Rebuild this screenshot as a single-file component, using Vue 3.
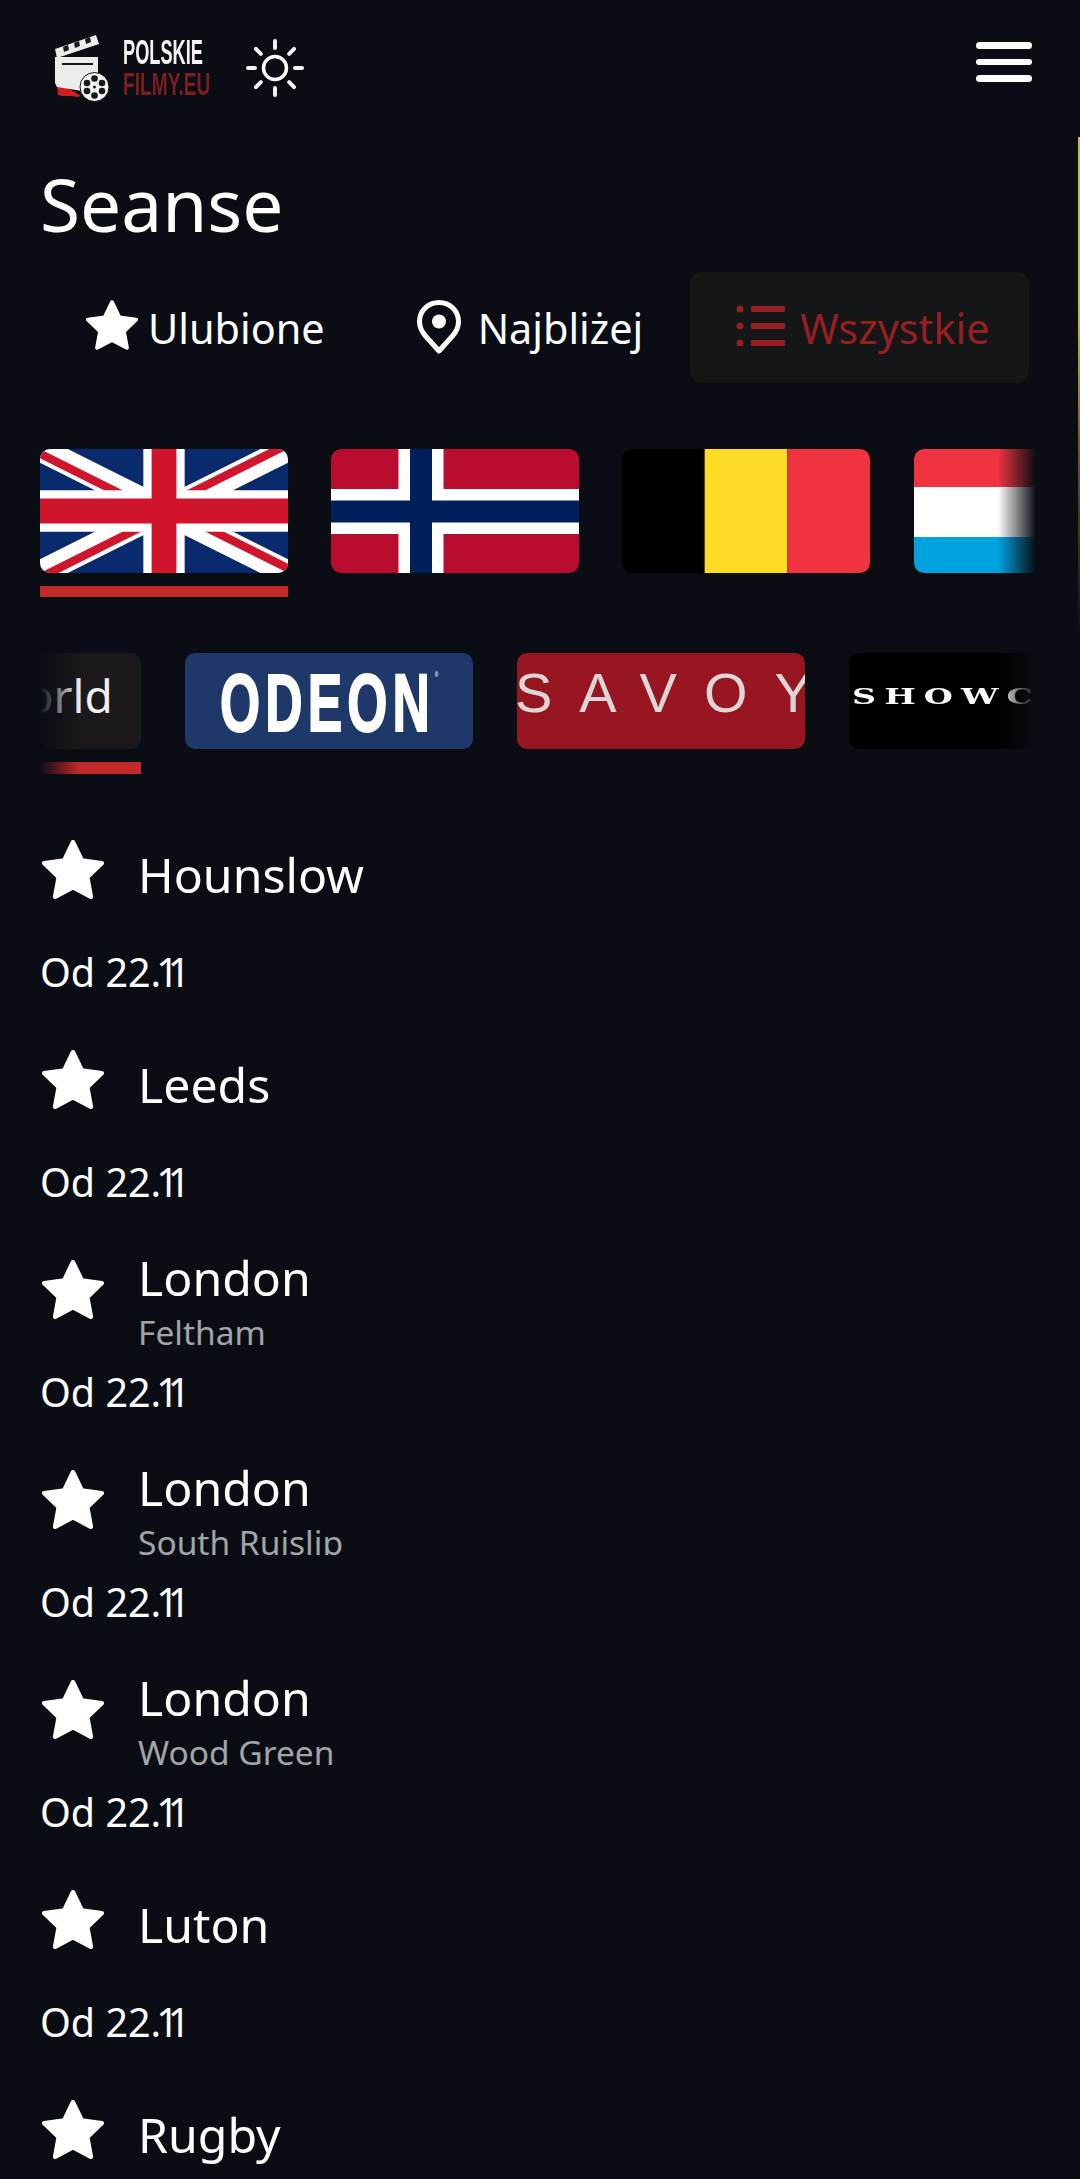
<script setup>
const starPath = 'M12 2.5l2.9 6 6.6.9-4.8 4.6 1.2 6.5-5.9-3.1-5.9 3.1 1.2-6.5-4.8-4.6 6.6-.9z'
const cities = [
  { name: 'Hounslow' },
  { name: 'Leeds' },
  { name: 'London', sub: 'Feltham' },
  { name: 'London', sub: 'South Ruislip' },
  { name: 'London', sub: 'Wood Green' },
  { name: 'Luton' },
  { name: 'Rugby' }
]
const rays = [0, 45, 90, 135, 180, 225, 270, 315]
</script>

<template>
  <div class="page">
    <i class="scrollbar"></i>

    <header class="header">
      <a class="logo">
        <svg class="logo-mark" viewBox="0 0 54 67" width="54" height="67">
          <path d="M2 51c8 1 14 3 24 10l-3 1C16 60 8 62 3 60z" fill="#d01f1f" />
          <path d="M0 22h43v34H27L2 52 0 48z" fill="#ececec" />
          <path d="M7 29h31" stroke="#15181c" stroke-width="2" />
          <path d="M0 14 41 0l3 9-42 14z" fill="#ececec" />
          <path d="M8 12l5-2 1 5-5 2zM19 8l5-2 1 5-5 2zM30 4l5-2 1 5-5 2z" fill="#15181c" />
          <circle cx="39.500" cy="52" r="14.500" fill="#f4f4f4" stroke="#0a0e14" stroke-width="1" />
          <g fill="#15181c">
            <circle cx="39.500" cy="43.500" r="3.300" />
            <circle cx="39.500" cy="60.500" r="3.300" />
            <circle cx="32" cy="48" r="3.300" />
            <circle cx="47" cy="48" r="3.300" />
            <circle cx="32" cy="56" r="3.300" />
            <circle cx="47" cy="56" r="3.300" />
            <circle cx="39.500" cy="52" r="1.500" />
          </g>
        </svg>
        <span class="logo-text">
          <span class="logo-top">POLSKIE</span>
          <span class="logo-bottom">FILMY.EU</span>
        </span>
      </a>
      <svg class="sun" viewBox="0 0 60 60" width="60" height="60">
        <circle cx="30" cy="30" r="11.500" fill="none" stroke="#fff" stroke-width="3.500" />
        <path
          v-for="r in rays"
          :key="r"
          d="M30 3v7"
          stroke="#f2f2f2"
          stroke-width="4"
          stroke-linecap="round"
          :transform="`rotate(${r} 30 30)`"
        />
      </svg>
      <div class="burger"><i></i><i></i><i></i></div>
    </header>

    <h1 class="title">Seanse</h1>

    <nav class="tabs">
      <div class="tab">
        <svg class="tab-star" viewBox="1.750 1.750 20.500 19.500"><path :d="starPath" /></svg>
        <span>Ulubione</span>
      </div>
      <div class="tab tab-near">
        <svg class="tab-pin" viewBox="0 0 44 54">
          <path d="M22 2.500C11 2.500 2.500 11 2.500 21.500c0 6 2.500 10.500 6 14.500L22 51l13.500-15c3.500-4 6-8.500 6-14.500C41.500 11 33 2.500 22 2.500z" fill="none" stroke="#fff" stroke-width="5" stroke-linejoin="round" />
          <circle cx="22" cy="21.500" r="7" fill="#fff" />
        </svg>
        <span>Najbliżej</span>
      </div>
      <div class="tab tab-active">
        <svg class="tab-list" viewBox="0 0 49 41">
          <circle cx="4" cy="4" r="3.500" />
          <circle cx="4" cy="21" r="3.500" />
          <circle cx="4" cy="38" r="3.500" />
          <rect x="15" y="1" width="34" height="6" rx="1" />
          <rect x="15" y="18" width="34" height="6" rx="1" />
          <rect x="15" y="35" width="34" height="6" rx="1" />
        </svg>
        <span>Wszystkie</span>
      </div>
    </nav>

    <section class="strip strip-flags">
      <div class="strip-item">
        <svg class="flag" viewBox="0 0 60 30" preserveAspectRatio="none">
          <clipPath id="uk-diagonals"><path d="M30 15h30v15zv15H0zH0V0zV0h30z" /></clipPath>
          <rect width="60" height="30" fill="#0a2a6e" />
          <path d="M0 0l60 30M60 0 0 30" stroke="#fff" stroke-width="6" />
          <path d="M0 0l60 30M60 0 0 30" clip-path="url(#uk-diagonals)" stroke="#cf142b" stroke-width="4" />
          <path d="M30 0v30M0 15h60" stroke="#fff" stroke-width="10" />
          <path d="M30 0v30M0 15h60" stroke="#cf142b" stroke-width="6" />
        </svg>
        <i class="marker"></i>
      </div>
      <div class="strip-item">
        <svg class="flag" viewBox="0 0 248 124" preserveAspectRatio="none">
          <rect width="248" height="124" fill="#ba0c2f" />
          <path d="M90 0v124M0 62.500h248" stroke="#fff" stroke-width="45" />
          <path d="M90 0v124M0 62.500h248" stroke="#00205b" stroke-width="22" />
        </svg>
      </div>
      <div class="strip-item">
        <svg class="flag" viewBox="0 0 3 1" preserveAspectRatio="none">
          <rect width="1" height="1" fill="#000" />
          <rect x="1" width="1" height="1" fill="#fdda24" />
          <rect x="2" width="1" height="1" fill="#ef3340" />
        </svg>
      </div>
      <div class="strip-item">
        <svg class="flag" viewBox="0 0 248 124" preserveAspectRatio="none">
          <rect width="248" height="38" fill="#ef3340" />
          <rect y="38" width="248" height="50" fill="#fff" />
          <rect y="88" width="248" height="36" fill="#00a3e0" />
        </svg>
      </div>
    </section>

    <section class="strip strip-cinemas">
      <div class="strip-item cine-first">
        <div class="cinema cinema-world"><span>Cineworld</span></div>
        <i class="marker marker-thick"></i>
      </div>
      <div class="strip-item">
        <div class="cinema cinema-odeon"><span>ODEON<sup>®</sup></span></div>
      </div>
      <div class="strip-item">
        <div class="cinema cinema-savoy"><span>SAVOY</span></div>
      </div>
      <div class="strip-item">
        <div class="cinema cinema-showcase"><span>SHOWCASE</span></div>
      </div>
    </section>

    <ul class="list">
      <li v-for="(c, i) in cities" :key="i" class="city">
        <div class="city-head">
          <svg class="city-star" viewBox="1.750 1.750 20.500 19.500"><path :d="starPath" /></svg>
          <div class="city-names" :class="{ single: !c.sub }">
            <div class="city-name">{{ c.name }}</div>
            <div v-if="c.sub" class="city-sub">{{ c.sub }}</div>
          </div>
        </div>
        <div class="city-date">Od 22<span class="dot">.</span><span class="one">1</span>1</div>
      </li>
    </ul>
  </div>
</template>

<style scoped>
.page {
  position: relative;
  height: 2179px;
  overflow: hidden;
  background: #0a0e14;
  color: #fff;
  font-family: "Noto Sans", "Open Sans", sans-serif;
}
.scrollbar {
  position: absolute;
  top: 137px;
  right: 0;
  width: 2px;
  height: 500px;
  background: linear-gradient(to bottom, #e6b41e 35%, rgba(150, 115, 20, 0.7) 65%, rgba(120, 95, 20, 0));
}
.header {
  display: flex;
  align-items: center;
  height: 136px;
  padding: 0 48px 0 55px;
}
.logo {
  display: flex;
  align-items: flex-start;
  width: 190px;
  height: 67px;
  margin-top: 1px;
}
.logo-mark {
  flex: none;
}
.logo-text {
  display: flex;
  flex-direction: column;
  margin-left: 14px;
  font-family: "Liberation Sans", sans-serif;
  font-weight: 700;
  white-space: nowrap;
}
.logo-top {
  font-size: 35px;
  line-height: 33px;
  color: #f4f4f4;
  transform: scaleX(0.52);
  transform-origin: left center;
}
.logo-bottom {
  font-size: 32px;
  line-height: 28px;
  margin-top: 2px;
  color: #7c1d1f;
  transform: scaleX(0.6);
  transform-origin: left center;
}
.sun {
  flex: none;
}
.burger {
  display: flex;
  flex-direction: column;
  gap: 10px;
  width: 56px;
  margin-left: auto;
  margin-top: -12px;
}
.burger i {
  display: block;
  height: 6.500px;
  border-radius: 4px;
  background: #fff;
}
.title {
  margin: 0;
  padding-left: 40px;
  height: 136px;
  font-size: 73px;
  font-weight: 400;
  line-height: 136px;
}
.tabs {
  display: flex;
  height: 111px;
  margin-left: 40px;
  font-size: 41.400px;
}
.tab {
  display: flex;
  align-items: center;
  padding: 0 46px;
}
.tab-star {
  width: 52px;
  height: 50px;
  margin-right: 10px;
  margin-top: -6px;
  fill: #fff;
  stroke: #fff;
  stroke-width: 1.500;
  stroke-linejoin: round;
}
.tab-near {
  padding-right: 47px;
}
.tab-pin {
  width: 44px;
  height: 54px;
  margin-right: 17px;
  margin-top: -2px;
}
.tab-active {
  flex: none;
  box-sizing: border-box;
  width: 339px;
  padding: 0 0 0 46px;
  border-radius: 12px;
  background: #141618;
  color: #962020;
}
.tab-list {
  width: 49px;
  height: 41px;
  margin-right: 15px;
  margin-top: -4px;
  fill: #962020;
}
.strip {
  display: flex;
  width: 996px;
  margin-left: 40px;
  overflow: hidden;
}
.strip-flags {
  gap: 43.200px;
  margin-top: 66px;
  height: 148px;
  -webkit-mask-image: linear-gradient(to right, #000 calc(100% - 38px), transparent);
  mask-image: linear-gradient(to right, #000 calc(100% - 38px), transparent);
}
.strip-cinemas {
  gap: 44px;
  margin-top: 56px;
  height: 121px;
  -webkit-mask-image: linear-gradient(to right, transparent, #000 40px, #000 calc(100% - 40px), transparent);
  mask-image: linear-gradient(to right, transparent, #000 40px, #000 calc(100% - 40px), transparent);
}
.strip-item {
  flex: none;
}
.flag {
  display: block;
  width: 248px;
  height: 124px;
  border-radius: 10px;
}
.marker {
  display: block;
  height: 11px;
  margin-top: 13px;
  background: #c52a2a;
}
.marker-thick {
  height: 12px;
}
.cine-first {
  margin-left: -187px;
}
.cinema {
  display: flex;
  align-items: center;
  justify-content: center;
  width: 288px;
  height: 96px;
  overflow: hidden;
  border-radius: 10px;
  white-space: nowrap;
}
.cinema-world {
  padding: 0 0 12px 14px;
  box-sizing: border-box;
  background: #1b191c;
  font-size: 46px;
  color: #f0f0f0;
}
.cinema-odeon {
  background: #1d3869;
  font-family: "Liberation Sans", sans-serif;
  font-size: 82px;
  font-weight: 700;
  color: #fff;
}
.cinema-odeon span {
  display: block;
  margin-top: 4px;
  line-height: 82px;
  transform: scaleX(0.63);
  letter-spacing: 8px;
  -webkit-text-stroke: 2px #fff;
}
.cinema-odeon sup {
  font-size: 8px;
  vertical-align: 54px;
  line-height: 0;
  letter-spacing: 0;
  -webkit-text-stroke: 0;
}
.cinema-savoy {
  justify-content: flex-start;
  padding-bottom: 18px;
  box-sizing: border-box;
  background: #981621;
  font-family: "Liberation Sans", sans-serif;
  font-size: 56px;
  letter-spacing: 27px;
  color: #dcd6d6;
}
.cinema-savoy span {
  display: block;
  margin-left: -2px;
}
.cinema-showcase {
  justify-content: flex-start;
  padding-bottom: 12px;
  box-sizing: border-box;
  background: #000;
  font-family: "DejaVu Serif", serif;
  font-size: 23px;
  font-weight: 700;
  letter-spacing: 5.600px;
  color: #fff;
}
.cinema-showcase span {
  display: block;
  margin-left: 3px;
  transform: scaleX(1.45);
  transform-origin: left center;
}
.list {
  margin: 39px 0 0;
  padding: 0 0 0 40px;
  list-style: none;
}
.city {
  height: 210px;
}
.city-head {
  display: flex;
  align-items: center;
  height: 112px;
}
.city-star {
  flex: none;
  width: 62px;
  height: 59px;
  margin-left: 2px;
  margin-right: 34px;
  fill: #fff;
  stroke: #fff;
  stroke-width: 1.500;
  stroke-linejoin: round;
}
.city-names {
  align-self: stretch;
  box-sizing: border-box;
  padding-top: 12px;
  overflow: hidden;
}
.city-names.single {
  padding-top: 29px;
}
.city-name {
  font-size: 48.200px;
  line-height: 64px;
  white-space: nowrap;
}
.city-sub {
  margin-top: 2px;
  font-size: 33.500px;
  line-height: 42px;
  color: #a2a5a8;
  white-space: nowrap;
}
.city-date {
  margin-top: 17px;
  font-size: 39.500px;
  line-height: 60px;
}
.dot {
  letter-spacing: -5px;
}
.one {
  letter-spacing: -11px;
}
</style>

<style>
html, body {
  margin: 0;
  background: #0a0e14;
  overflow: hidden;
}
</style>
